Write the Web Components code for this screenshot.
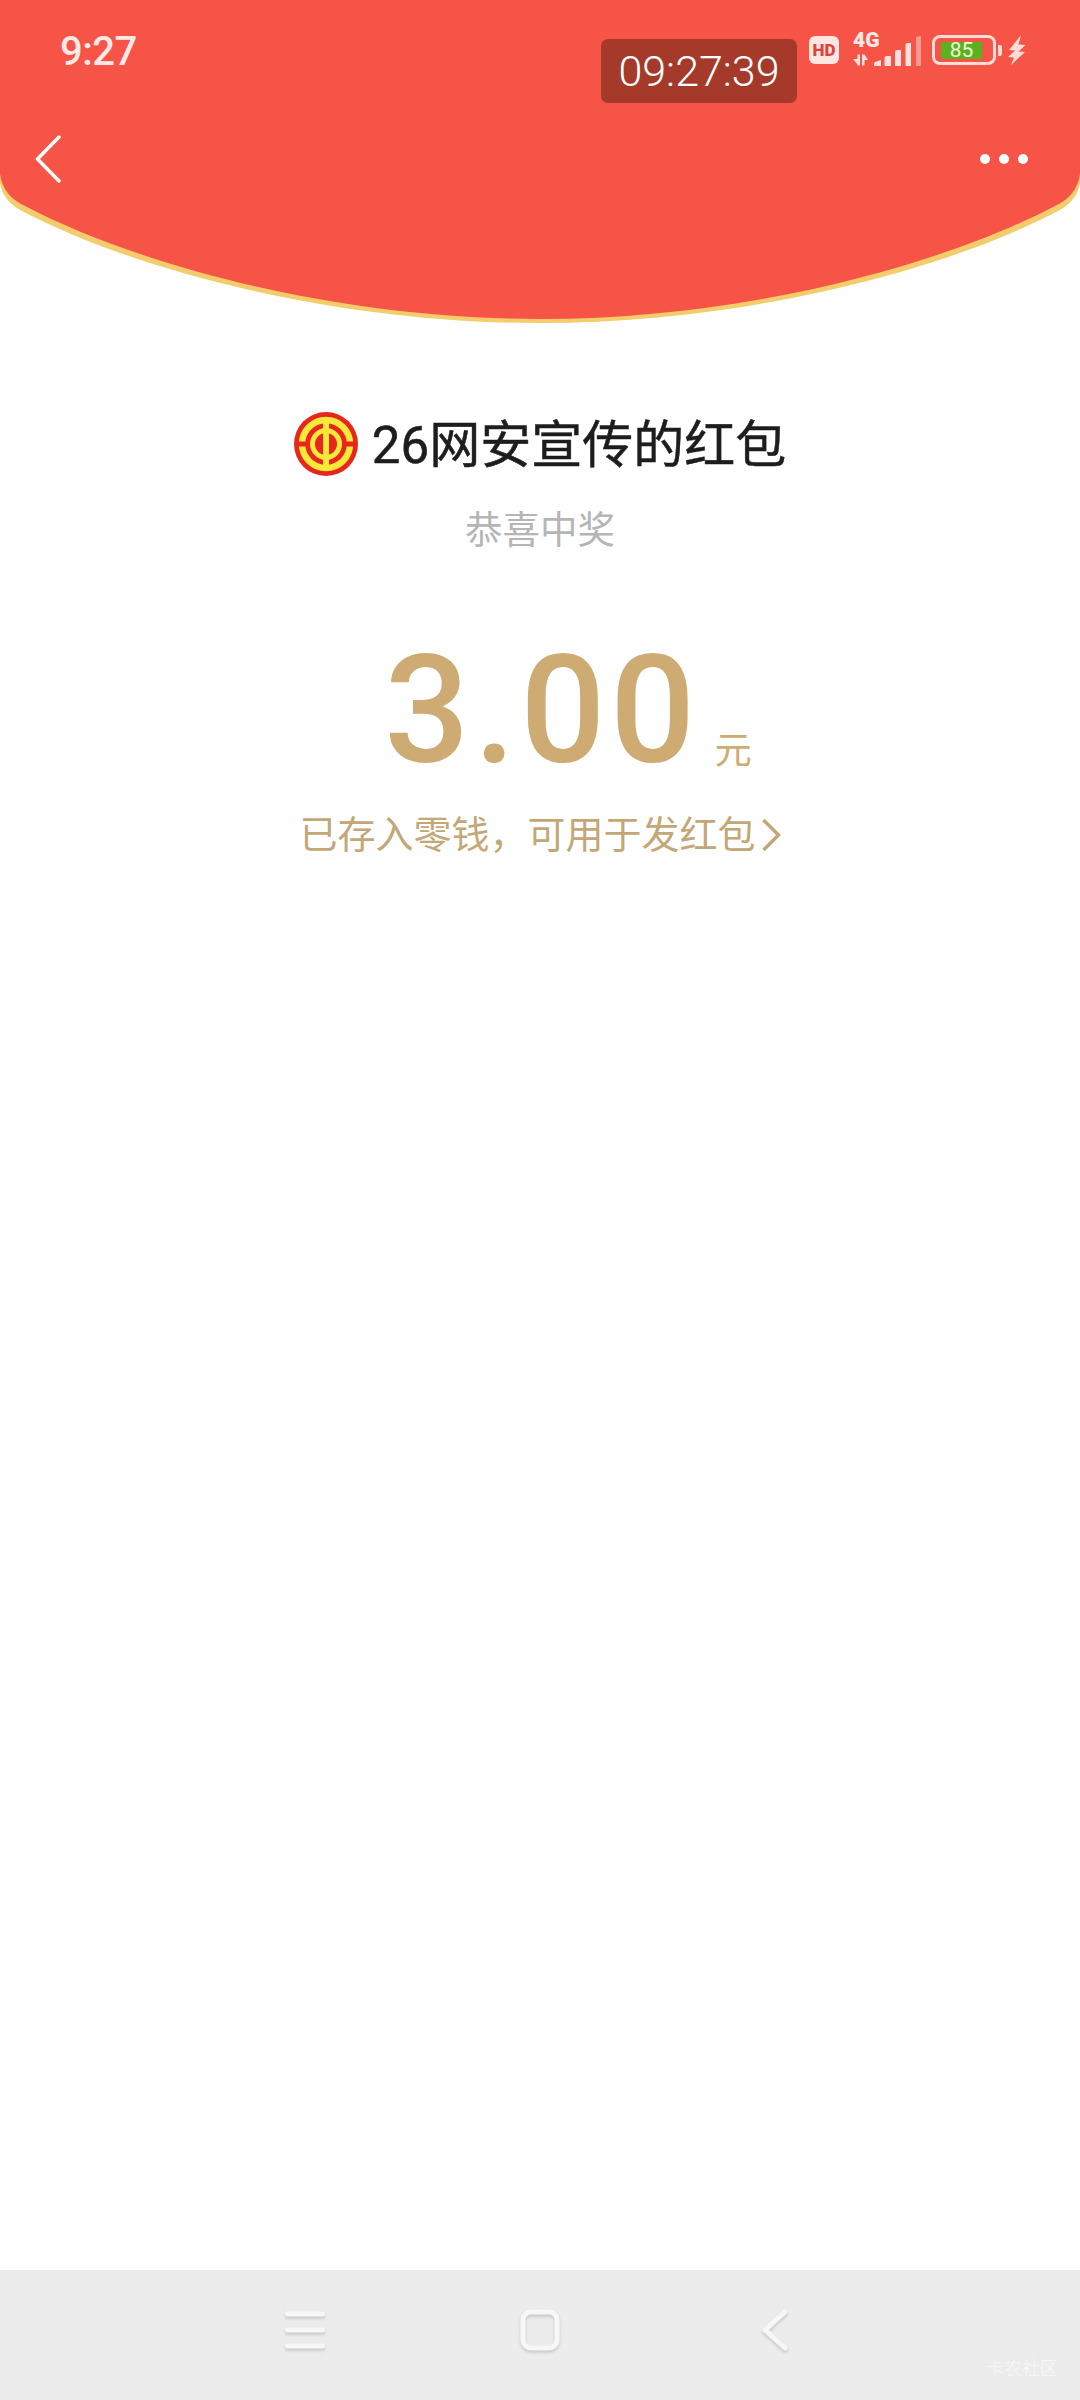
<!DOCTYPE html>
<html lang="zh">
<head>
<meta charset="utf-8">
<title>红包</title>
<style>
    html, body { margin: 0; padding: 0; background: #fff; }
</style>
</head>
<body>
<packet-page>
    <packet-header></packet-header>
    <packet-detail slot="detail">
        <span slot="sender">26网安宣传的红包</span>
        <span slot="wish">恭喜中奖</span>
        <span slot="amount">3.00</span>
    </packet-detail>
    <system-nav slot="nav"></system-nav>
</packet-page>

<script>
class PacketPage extends HTMLElement {
    constructor(){
        super();
        this.shadowDOM = this.attachShadow({mode:"open"});
    }
    connectedCallback(){
        this.shadowDOM.innerHTML = `
        <style>
        :host {
            display: flex;
            flex-direction: column;
            width: 1080px;
            height: 2400px;
            background: #fff;
            font-family: Roboto, "Noto Sans CJK SC", sans-serif;
        }
        .middle { flex: 1; }
        </style>
        <slot></slot>
        <div class="middle"><slot name="detail"></slot></div>
        <slot name="nav"></slot>
        `;
    }
}

class StatusBar extends HTMLElement {
    constructor(){
        super();
        this.shadowDOM = this.attachShadow({mode:"open"});
    }
    connectedCallback(){
        this.shadowDOM.innerHTML = `
        <style>
        :host {
            display: flex;
            height: 112px;
            padding: 0 54px 0 60px;
            box-sizing: border-box;
            color: #ffe9e6;
        }
        .time {
            margin-top: 28px;
            font-size: 40px;
            line-height: 48px;
            font-weight: 500;
            letter-spacing: -0.5px;
        }
        .clock {
            margin: 39px 0 0 auto;
            width: 196px;
            height: 64px;
            border-radius: 7px;
            background: #a53a2b;
            color: #fff;
            font-size: 43px;
            font-weight: 300;
            line-height: 64px;
            text-align: center;
        }
        .hd {
            margin: 36px 0 0 12px;
            width: 30px;
            height: 28px;
            border-radius: 6px;
            background: #ffe6e3;
            color: #d9453a;
            font-size: 17px;
            font-weight: 900;
            line-height: 28px;
            text-align: center;
        }
        .net {
            position: relative;
            margin: 33px 0 0 14px;
            width: 68px;
            height: 32px;
        }
        .net span {
            position: absolute;
            left: 0;
            top: 0;
            font-size: 21px;
            font-weight: 900;
            line-height: 15px;
        }
        .net svg { position: absolute; left: 0; top: 0; }
        .battery {
            display: flex;
            align-items: center;
            margin: 35px 0 0 11px;
            height: 30px;
        }
        .battery-body {
            display: flex;
            align-items: center;
            width: 64px;
            height: 30px;
            padding: 0 0 0 6px;
            box-sizing: border-box;
            border: 3px solid #ffdcd8;
            border-radius: 8px;
        }
        .level {
            width: 41px;
            height: 17px;
            background: #5cb21e;
            color: #ecffd9;
            font-size: 21px;
            line-height: 17px;
            text-align: center;
        }
        .nub {
            width: 4px;
            height: 11px;
            margin-left: 2px;
            background: #ffdcd8;
            border-radius: 0 2px 2px 0;
        }
        .bolt { margin: 35px 0 0 6px; }
        </style>
        <div class="time">9:27</div>
        <div class="clock">09:27:39</div>
        <div class="hd">HD</div>
        <div class="net">
            <span>4G</span>
            <svg width="68" height="33" viewBox="0 0 68 33">
                <path d="M0 26h4.500v-4.500h2.500v11h-2.500v-1zM9 21.500h2.500l3.500 5.500h-3.500v5.500h-2.500z" fill="#ffe0dc"/>
                <path d="M21 33v-2.500q0-1 1-1.500l6-2v6zM31.500 33v-8q0-2 2-2h4.500v10zM42 33v-14q0-2 2-2h4v16zM52.500 33v-21q0-2 2-2h3.500v23z" fill="#ffe0dc"/>
                <path d="M63 33v-29l5-1v30z" fill="#fd9a8f"/>
            </svg>
        </div>
        <div class="battery">
            <div class="battery-body"><div class="level">85</div></div>
            <div class="nub"></div>
        </div>
        <svg class="bolt" width="18" height="30" viewBox="0 0 18 30">
            <path d="M13 0L1 15l6 0.500-7 6.500 6 0.500L3 30l14-13-6.500-0.500 7-6.500-7-0.500z" fill="#ffdcd8"/>
        </svg>
        `;
    }
}

class PacketHeader extends HTMLElement {
    constructor(){
        super();
        this.shadowDOM = this.attachShadow({mode:"open"});
    }
    connectedCallback(){
        this.shadowDOM.innerHTML = `
        <style>
        :host {
            display: block;
            position: relative;
            height: 323px;
        }
        .curve { position: absolute; left: 0; top: 0; }
        .content { position: relative; }
        .bar {
            display: flex;
            align-items: center;
            justify-content: space-between;
            height: 94px;
            padding: 0 52px 0 35px;
        }
        .dots { display: flex; gap: 9px; }
        .dots i {
            width: 10px;
            height: 10px;
            border-radius: 50%;
            background: #fff;
        }
        </style>
        <svg class="curve" width="1080" height="323" viewBox="0 0 1080 323">
            <path d="M0 0H1080V183Q1077 201 1058 211C950 268 750 323 540 323C330 323 130 268 22 211Q3 201 0 183Z" fill="#f3cd6c"/>
            <path d="M0 0H1080V174Q1077 196 1055 206C946 263 750 319 540 319C330 319 134 263 25 206Q3 196 0 174Z" fill="#f55446"/>
        </svg>
        <div class="content">
            <status-bar></status-bar>
            <div class="bar">
                <svg width="26" height="48" viewBox="0 0 26 48">
                    <path d="M24 2L2.500 24 24 46" fill="none" stroke="#fff" stroke-width="3.500" stroke-linecap="round" stroke-linejoin="round"/>
                </svg>
                <div class="dots"><i></i><i></i><i></i></div>
            </div>
        </div>
        `;
    }
}

class PacketDetail extends HTMLElement {
    constructor(){
        super();
        this.shadowDOM = this.attachShadow({mode:"open"});
    }
    connectedCallback(){
        this.shadowDOM.innerHTML = `
        <style>
        :host {
            display: flex;
            flex-direction: column;
            align-items: center;
            padding-top: 89px;
            font-family: Roboto, "Noto Sans CJK SC", sans-serif;
        }
        .sender {
            display: flex;
            align-items: center;
            gap: 14px;
            height: 64px;
            color: #1d1d1d;
            font-size: 51px;
            line-height: 64px;
            -webkit-text-stroke: 0.5px #1d1d1d;
        }
        .sender span { padding-top: 4px; }
        .wish {
            margin-top: 29px;
            color: #b5b5b5;
            font-size: 37.500px;
            line-height: 50px;
        }
        .amount {
            display: flex;
            margin-top: 81px;
            color: #cdab72;
            font-size: 150px;
            font-weight: 500;
            line-height: 150px;
            letter-spacing: 4.500px;
        }
        .unit {
            align-self: flex-end;
            width: 37px;
            margin: 0 -56px 9px 15px;
            font-size: 37px;
            font-weight: 400;
            line-height: 50px;
            letter-spacing: 0;
        }
        .note {
            display: flex;
            align-items: center;
            gap: 6px;
            margin-top: 24px;
            color: #c3a776;
            font-size: 38px;
            line-height: 50px;
        }
        </style>
        <div class="sender">
            <svg width="64" height="64" viewBox="0 0 64 64">
                <circle cx="32" cy="32" r="32" fill="#e8261b"/>
                <circle cx="32" cy="32" r="24" fill="none" stroke="#f7e93a" stroke-width="6.500"/>
                <circle cx="32" cy="32" r="13.500" fill="none" stroke="#f7e93a" stroke-width="5"/>
                <rect x="29" y="5" width="6" height="54" fill="#f7e93a"/>
                <rect x="3" y="29.500" width="9" height="5" fill="#e8261b"/>
                <rect x="52" y="29.500" width="9" height="5" fill="#e8261b"/>
            </svg>
            <span><slot name="sender"></slot></span>
        </div>
        <div class="wish"><slot name="wish"></slot></div>
        <div class="amount"><slot name="amount"></slot><span class="unit">元</span></div>
        <div class="note">
            <span>已存入零钱，可用于发红包</span>
            <svg width="19" height="34" viewBox="0 0 19 34">
                <path d="M1.500 2l15 15-15 15" fill="none" stroke="#c3a776" stroke-width="3.500"/>
            </svg>
        </div>
        `;
    }
}

class SystemNav extends HTMLElement {
    constructor(){
        super();
        this.shadowDOM = this.attachShadow({mode:"open"});
    }
    connectedCallback(){
        this.shadowDOM.innerHTML = `
        <style>
        :host {
            display: flex;
            position: relative;
            align-items: center;
            gap: 195px;
            height: 130px;
            padding: 0 0 10px 285px;
            box-sizing: border-box;
            background: #ececec;
        }
        svg { filter: drop-shadow(0 2px 1.500px rgba(0,0,0,.16)); }
        svg:last-of-type { margin-left: 5px; }
        .mark {
            position: absolute;
            right: 22px;
            bottom: 22px;
            color: #f8f8f8;
            font-family: "Noto Sans CJK SC", sans-serif;
            font-size: 18px;
            font-weight: 300;
            line-height: 22px;
        }
        </style>
        <svg width="40" height="38" viewBox="0 0 40 38">
            <path d="M2.500 3h35M2.500 19h35M2.500 35h35" stroke="#f7f7f7" stroke-width="5" stroke-linecap="round"/>
        </svg>
        <svg width="40" height="42" viewBox="0 0 40 42">
            <rect x="3" y="3" width="34" height="36" rx="8" fill="none" stroke="#f7f7f7" stroke-width="5"/>
        </svg>
        <svg width="28" height="42" viewBox="0 0 28 42">
            <path d="M25 3L5 21l20 18" fill="none" stroke="#f7f7f7" stroke-width="5" stroke-linecap="round" stroke-linejoin="round"/>
        </svg>
        <div class="mark">卡农社区</div>
        `;
    }
}

customElements.define("packet-page", PacketPage);
customElements.define("status-bar", StatusBar);
customElements.define("packet-header", PacketHeader);
customElements.define("packet-detail", PacketDetail);
customElements.define("system-nav", SystemNav);
</script>
</body>
</html>
